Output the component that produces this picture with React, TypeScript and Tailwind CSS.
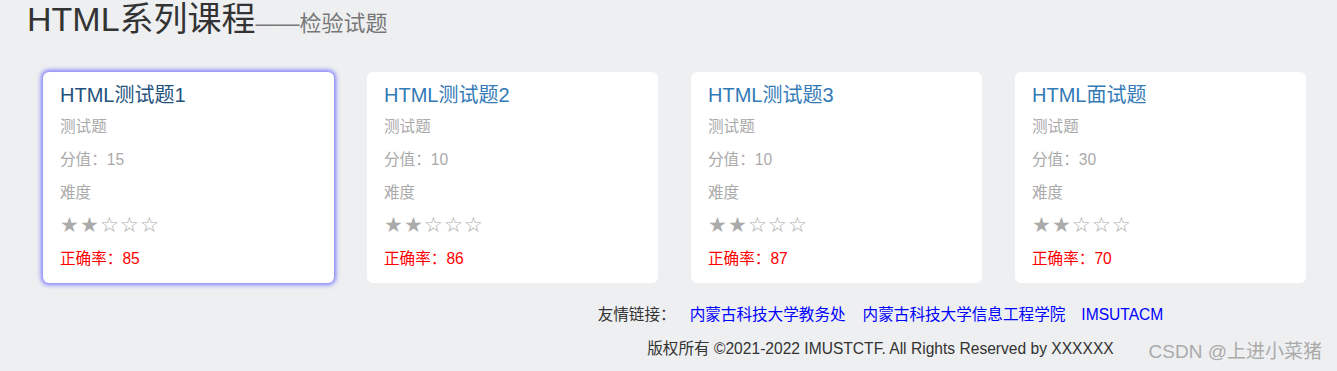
import React from 'react';

type Quiz = {
  title: string;
  score: number;
  rate: number;
  stars: number;
  active?: boolean;
};

const quizzes: Quiz[] = [
  { title: 'HTML测试题1', score: 15, rate: 85, stars: 2, active: true },
  { title: 'HTML测试题2', score: 10, rate: 86, stars: 2 },
  { title: 'HTML测试题3', score: 10, rate: 87, stars: 2 },
  { title: 'HTML面试题', score: 30, rate: 70, stars: 2 },
];

const font = "font-['Liberation_Sans','Noto_Sans_CJK_SC',sans-serif]";

const App = () => {
  // five stars, filled ones first
  const renderStars = (n: number) => (
    <div className="flex">
      {Array(5).fill('').map((_, i) => (
        <span key={i} className="w-[20px] text-[21px] leading-none text-[#aaa] font-['DejaVu_Sans',sans-serif]">
          {i < n ? '★' : '☆'}
        </span>
      ))}
    </div>
  );

  return (
    <div className={`relative min-h-[371px] bg-[#eeeff1] ${font}`}>
      {/* Heading */}
      <h1 className="flex h-[40px] items-baseline overflow-hidden pl-[27px] leading-[38px] text-[34px] text-[#333]">
        HTML系列课程<span className="text-[22px] text-[#777]">——检验试题</span>
      </h1>

      {/* Cards */}
      <div className="mt-[32px] flex gap-[33px] pl-[43px]">
        {quizzes.map((q) => (
          <div
            key={q.title}
            className={`flex h-[211px] w-[291px] flex-col rounded-[6px] bg-white px-[17px] pt-[8px] pb-[8px] ${
              q.active ? 'shadow-[0_0_4px_2px_rgba(100,100,255,0.8)]' : ''
            }`}
          >
            <div className={`flex h-[30px] items-center text-[20px] ${q.active ? 'text-[#23527c]' : 'text-[#337ab7]'}`}>
              {q.title}
            </div>
            <div className="flex h-[33px] items-center text-[15.6px] text-[#aaa]">测试题</div>
            <div className="flex h-[33px] items-center text-[15.6px] text-[#aaa]">分值：{q.score}</div>
            <div className="flex h-[33px] items-center text-[15.6px] text-[#aaa]">难度</div>
            <div className="flex h-[33px] items-center">{renderStars(q.stars)}</div>
            <div className="flex h-[33px] items-center text-[15.6px] text-[#f00]">正确率：{q.rate}</div>
          </div>
        ))}
      </div>

      {/* Footer */}
      <div className="mt-[20px] flex flex-col items-center pl-[424px] text-[15.6px] text-[#333]">
        <div className="flex h-[24px] items-center">
          <span>友情链接：</span>
          <a href="#" className="ml-[14px] text-[#0000ff]">内蒙古科技大学教务处</a>
          <a href="#" className="ml-[17px] text-[#0000ff]">内蒙古科技大学信息工程学院</a>
          <a href="#" className="ml-[16px] text-[#0000ff]">IMSUTACM</a>
        </div>
        <div className="mt-[10px] flex h-[24px] items-center">
          版权所有 ©2021-2022 IMUSTCTF. All Rights Reserved by XXXXXX
        </div>
      </div>

      {/* watermark */}
      <div className="absolute right-[15px] top-[338px] text-[19px] text-[#aaa]">CSDN @上进小菜猪</div>
    </div>
  );
};

export default App;
